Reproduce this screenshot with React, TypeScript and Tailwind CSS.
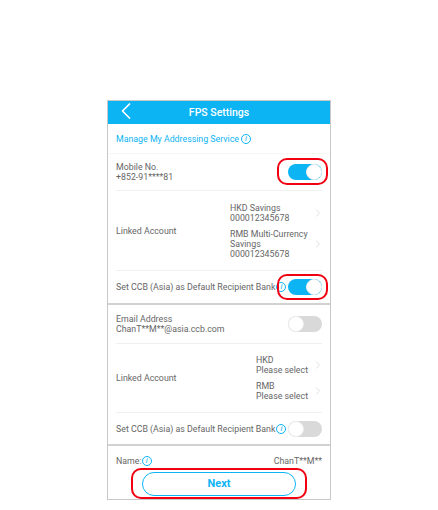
import { ChevronLeft, ChevronRight } from 'lucide-react';

function Info() {
  return (
    <span className="flex h-[10px] w-[10px] shrink-0 items-center justify-center rounded-full border border-[#0cb4f4] text-[8px] italic leading-none text-[#0cb4f4]">
      i
    </span>
  );
}

function Toggle({ on }: { on: boolean }) {
  return (
    <div
      className={`flex h-[16px] w-[34px] shrink-0 rounded-full ${on ? 'justify-end bg-[#0cb4f4]' : 'justify-start bg-[#d9d9d9]'}`}
    >
      <div className="h-[16px] w-[16px] rounded-full border border-[#eeeeee] bg-white" />
    </div>
  );
}

function AccountLine({ lines, width }: { lines: string[]; width: string }) {
  return (
    <div className="flex items-center justify-end">
      <div className={`whitespace-nowrap ${width}`}>
        {lines.map((line) => (
          <div key={line}>{line}</div>
        ))}
      </div>
      <ChevronRight size={12} strokeWidth={1.2} className="-mr-[2px] text-[#c9c9c9]" />
    </div>
  );
}

function Highlight({ className }: { className: string }) {
  return <div className={`absolute rounded-[10px] border-2 border-[#f00010] ${className}`} />;
}

function ToggleRow({ lines, on, height }: { lines: string[]; on: boolean; height: string }) {
  return (
    <div className={`mx-[8px] flex items-center justify-between border-b border-[#f0f0f0] ${height}`}>
      <div>
        {lines.map((line) => (
          <div key={line}>{line}</div>
        ))}
      </div>
      <Toggle on={on} />
    </div>
  );
}

function BankRow({ on, height }: { on: boolean; height: string }) {
  return (
    <div className={`mx-[8px] flex items-center justify-between ${height}`}>
      <div className="flex items-center gap-px whitespace-nowrap">
        Set CCB (Asia) as Default Recipient Bank
        <Info />
      </div>
      <Toggle on={on} />
    </div>
  );
}

export default function App() {
  return (
    <div className="relative h-[510px] w-[438px] bg-white font-['Roboto',sans-serif] text-[8.8px] leading-[10px] text-[#666666]">
      <div className="absolute left-[107px] top-[100px] h-[400px] w-[224px] border border-[#c8c8c8]">
        <header className="flex h-[23px] items-center justify-center bg-[#0cb4f4] text-[10.5px] font-medium text-white">
          <ChevronLeft size={28} strokeWidth={1.5} className="absolute left-[4px] -top-[4px]" />
          FPS Settings
        </header>

        <div className="mx-[8px] flex h-[29px] items-center gap-[2px] text-[#0cb4f4]">
          Manage My Addressing Service
          <Info />
        </div>

        <div className="border-t border-[#f6f6f6]">
          <ToggleRow lines={['Mobile No.', '+852-91****81']} on height="h-[37px]" />
        </div>
        <div className="mx-[8px] flex h-[80px] items-center justify-between border-b border-[#f0f0f0]">
          <div>Linked Account</div>
          <div className="flex flex-col gap-[6px]">
            <AccountLine lines={['HKD Savings', '000012345678']} width="w-[82px]" />
            <AccountLine lines={['RMB Multi-Currency', 'Savings', '000012345678']} width="w-[82px]" />
          </div>
        </div>
        <BankRow on height="h-[32px]" />

        <div className="border-t-2 border-[#d2d2d2]">
          <ToggleRow lines={['Email Address', 'ChanT**M**@asia.ccb.com']} on={false} height="h-[39px]" />
        </div>
        <div className="mx-[8px] flex h-[69px] items-center justify-between border-b border-[#f0f0f0]">
          <div>Linked Account</div>
          <div className="flex flex-col gap-[6px]">
            <AccountLine lines={['HKD', 'Please select']} width="w-[56px]" />
            <AccountLine lines={['RMB', 'Please select']} width="w-[56px]" />
          </div>
        </div>
        <BankRow on={false} height="h-[31px]" />

        <div className="border-t-2 border-[#d2d2d2]">
          <div className="mx-[8px] flex h-[26px] items-center justify-between pt-[3px]">
            <div className="flex items-center">
              Name:
              <Info />
            </div>
            <div>ChanT**M**</div>
          </div>
          <div className="flex justify-center">
            <button className="h-[24px] w-[154px] rounded-full border border-[#0cb4f4] text-[11px] font-bold text-[#0cb4f4]">
              Next
            </button>
          </div>
        </div>
      </div>

      <Highlight className="left-[277px] top-[158px] h-[27px] w-[51px]" />
      <Highlight className="left-[277px] top-[274px] h-[26px] w-[51px]" />
      <Highlight className="left-[131px] top-[468px] h-[31px] w-[176px]" />
    </div>
  );
}
